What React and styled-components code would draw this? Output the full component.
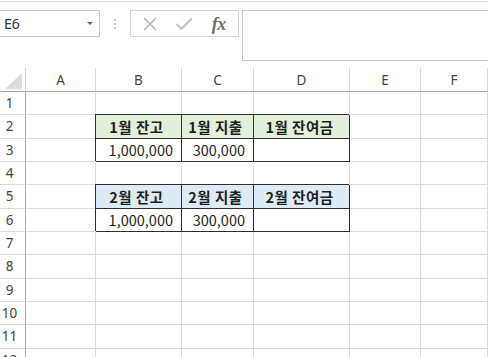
import React from 'react';
import styled, { createGlobalStyle } from 'styled-components';

const Global = createGlobalStyle`
  html, body { margin: 0; padding: 0; background: #fff; overflow: hidden; }
  body { font-family: "Noto Sans", "Noto Sans CJK KR", sans-serif; color: #222; }
  * { box-sizing: border-box; }
`;

const Page = styled.div`
  width: 488px;
  height: 357px;
  overflow: hidden;
  display: flex;
  flex-direction: column;
`;

const TopEdge = styled.div`
  height: 1px;
  margin-top: 1px;
  background: #e3e3e3;
  flex: none;
`;

const FormulaBar = styled.div`
  display: flex;
  align-items: flex-start;
  margin-top: 8px;
  height: 51px;
  flex: none;
`;

const NameBox = styled.div`
  width: 100px;
  height: 27px;
  border: 1px solid #c6c6c6;
  border-left: none;
  display: flex;
  align-items: center;
  justify-content: space-between;
  padding: 0 6px 0 4px;
  font-size: 14px;
  color: #333;
`;

const Caret = styled.span`
  width: 0;
  height: 0;
  border-left: 3px solid transparent;
  border-right: 3px solid transparent;
  border-top: 3px solid #6a6a6a;
`;

const Grip = styled.div`
  width: 30px;
  height: 27px;
  display: flex;
  flex-direction: column;
  align-items: center;
  justify-content: center;
  gap: 2px;
`;

const GripDot = styled.span`
  width: 2px;
  height: 2px;
  background: #c4c4c4;
`;

const FxBox = styled.div`
  width: 109px;
  height: 27px;
  border: 1px solid #d4d4d4;
  display: flex;
  align-items: center;
  padding: 0 2px;
`;

const FxSlot = styled.div`
  width: 35px;
  height: 25px;
  display: flex;
  align-items: center;
  justify-content: center;
`;

const FxText = styled.span`
  font-family: "Liberation Serif", "DejaVu Serif", serif;
  font-style: italic;
  font-weight: 700;
  font-size: 18px;
  color: #707070;
  letter-spacing: -0.5px;
  line-height: 1;
`;

const FormulaInput = styled.div`
  flex: 1;
  margin-left: 3px;
  height: 51px;
  border: 1px solid #c6c6c6;
  border-right: none;
`;

const Sheet = styled.div`
  margin-top: 7px;
  display: grid;
  grid-template-columns: 26px 70px 86px 72px 96px 71px 1fr;
  grid-template-rows: 24px repeat(12, 23.33px);
  flex: none;
`;

const Corner = styled.div`
  border-right: 1px solid #d4d4d4;
  border-bottom: 1px solid #ababab;
  display: flex;
  align-items: flex-end;
  justify-content: flex-end;
  padding: 0 3px 2px 0;
`;

const CornerTri = styled.span`
  width: 0;
  height: 0;
  border-left: 17px solid transparent;
  border-bottom: 16px solid #dcdcdc;
`;

const ColHead = styled.div`
  border-right: 1px solid #d8d8d8;
  border-bottom: 1px solid #ababab;
  display: flex;
  align-items: center;
  justify-content: center;
  font-size: 13.5px;
  color: #444;
`;

const RowHead = styled.div`
  border-right: 1px solid #ababab;
  border-bottom: 1px solid #dadada;
  display: flex;
  align-items: center;
  justify-content: center;
  padding-right: 6px;
  font-size: 13.5px;
  color: #444;
`;

const Cell = styled.div`
  border-right: 1px solid ${p => (p.$boxed ? '#2e2e2e' : '#dadada')};
  border-bottom: 1px solid ${p => (p.$boxed ? '#2e2e2e' : '#dadada')};
  box-shadow: ${p => (p.$boxed ? '-1px -1px 0 0 #2e2e2e' : 'none')};
  background: ${p => p.$fill || 'transparent'};
  display: flex;
  align-items: center;
  justify-content: ${p => (p.$head ? 'center' : 'flex-end')};
  padding: 0 8px 0 4px;
  font-family: "Noto Sans CJK KR", "Noto Sans", sans-serif;
  font-size: 14.5px;
  font-weight: ${p => (p.$head ? 700 : 400)};
  letter-spacing: ${p => (p.$head ? '0.5px' : '0')};
  color: #1e1e1e;
  white-space: nowrap;
  overflow: hidden;
`;

const GREEN = '#e2efda';
const BLUE = '#ddebf7';

const tables = {
  2: { fill: GREEN, head: true, values: ['1월 잔고', '1월 지출', '1월 잔여금'] },
  3: { values: ['1,000,000', '300,000', ''] },
  5: { fill: BLUE, head: true, values: ['2월 잔고', '2월 지출', '2월 잔여금'] },
  6: { values: ['1,000,000', '300,000', ''] },
};

const columns = ['A', 'B', 'C', 'D', 'E', 'F'];

function XIcon() {
  return (
    <svg width="16" height="16" viewBox="0 0 16 16">
      <path d="M2 2 L14 14 M14 2 L2 14" stroke="#b8b8b8" strokeWidth="1.6" fill="none" />
    </svg>
  );
}

function CheckIcon() {
  return (
    <svg width="18" height="14" viewBox="0 0 18 14">
      <path d="M1.5 7 L6.5 12 L16.5 1.5" stroke="#c4c4c4" strokeWidth="2.2" fill="none" />
    </svg>
  );
}

export default function App() {
  const rows = [];
  for (let r = 1; r <= 12; r++) {
    const t = tables[r];
    rows.push(<RowHead key={`h${r}`}>{r}</RowHead>);
    columns.forEach((c, i) => {
      const inTable = t && i >= 1 && i <= 3;
      rows.push(
        <Cell
          key={`${c}${r}`}
          $boxed={inTable}
          $fill={inTable ? t.fill : undefined}
          $head={inTable && t.head}
        >
          {inTable ? t.values[i - 1] : ''}
        </Cell>
      );
    });
  }

  return (
    <Page>
      <Global />
      <TopEdge />
      <FormulaBar>
        <NameBox>
          <span>E6</span>
          <Caret />
        </NameBox>
        <Grip>
          <GripDot />
          <GripDot />
          <GripDot />
        </Grip>
        <FxBox>
          <FxSlot><XIcon /></FxSlot>
          <FxSlot><CheckIcon /></FxSlot>
          <FxSlot><FxText>fx</FxText></FxSlot>
        </FxBox>
        <FormulaInput />
      </FormulaBar>
      <Sheet>
        <Corner><CornerTri /></Corner>
        {columns.map(c => (
          <ColHead key={c}>{c}</ColHead>
        ))}
        {rows}
      </Sheet>
    </Page>
  );
}
